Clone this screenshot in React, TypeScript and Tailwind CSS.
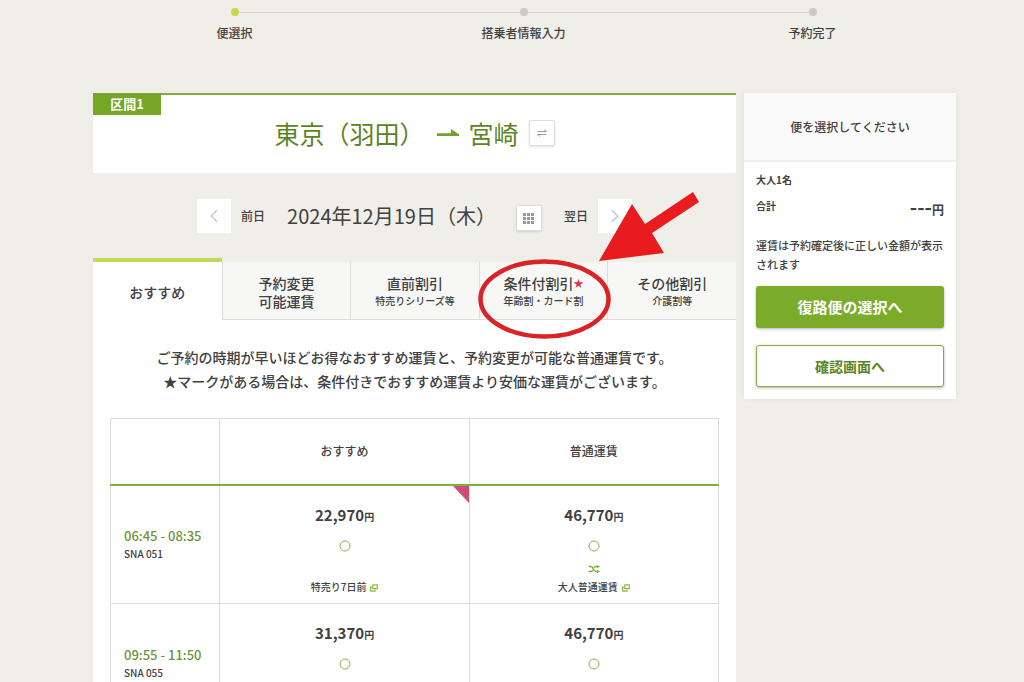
import { ChevronLeft, ChevronRight } from "lucide-react";

const steps = ["便選択", "搭乗者情報入力", "予約完了"];

const tabs = [
  { title: "おすすめ", active: true },
  { title: "予約変更", second: "可能運賃" },
  { title: "直前割引", sub: "特売りシリーズ等" },
  { title: "条件付割引", sub: "年齢割・カード割", star: true },
  { title: "その他割引", sub: "介護割等" },
];

type Fare = {
  price: string;
  name?: string;
  changeable?: boolean;
  cheaper?: boolean;
};

type Flight = { time: string; code: string; fares: Fare[] };

const flights: Flight[] = [
  {
    time: "06:45 - 08:35",
    code: "SNA 051",
    fares: [
      { price: "22,970", name: "特売り7日前", cheaper: true },
      { price: "46,770", name: "大人普通運賃", changeable: true },
    ],
  },
  {
    time: "09:55 - 11:50",
    code: "SNA 055",
    fares: [{ price: "31,370" }, { price: "46,770" }],
  },
];

function Steps() {
  return (
    <ol className="grid grid-cols-3 pt-2 pl-[90px] pr-[67px]">
      {steps.map((step, i) => (
        <li key={step} className="flex flex-col gap-2">
          <div className="flex items-center">
            <span className={i === 0 ? "flex-1" : "h-px flex-1 bg-[#d3d2ce]"} />
            <span
              className={
                i === 0
                  ? "size-2 rounded-full bg-[#c3d94a]"
                  : "size-2 rounded-full bg-[#c9c9c9]"
              }
            />
            <span
              className={
                i === steps.length - 1 ? "flex-1" : "h-px flex-1 bg-[#d3d2ce]"
              }
            />
          </div>
          <span className="text-center text-xs leading-[18px]">{step}</span>
        </li>
      ))}
    </ol>
  );
}

function RouteHeader() {
  return (
    <section className="relative flex h-20 items-center justify-center rounded-b-xs border-t-2 border-[#83ad41] bg-white pb-0.5">
      <span className="absolute -top-0.5 left-0 flex h-[22px] w-[68px] items-center justify-center bg-[#76a626] text-[13px] font-bold text-white">
        区間1
      </span>
      <h1 className="flex items-center text-[25px] leading-8 font-normal text-[#5b8524]">
        <span>東京（羽田）</span>
        <svg
          className="mr-[10px] ml-3"
          width="22"
          height="8"
          viewBox="0 0 22 8"
          fill="#76a132"
          aria-hidden="true"
        >
          <path d="M0 4.2H14V0L22 5.2V7H0Z" />
        </svg>
        <span>宮崎</span>
      </h1>
      <button
        type="button"
        aria-label="区間を入れ替える"
        className="ml-[10px] flex size-[26px] items-center justify-center rounded-xs border border-[#dedede] bg-white shadow-sm"
      >
        <svg
          width="10"
          height="8"
          viewBox="0 0 10 8"
          fill="none"
          stroke="#858585"
          strokeWidth="0.8"
        >
          <path d="M0.5 2.5H9.5M7 0.5L9.5 2.5M9.5 5.5H0.5M3 7.5L0.5 5.5" />
        </svg>
      </button>
    </section>
  );
}

function DateNav() {
  return (
    <div className="mt-[26px] flex items-center justify-center text-xs">
      <button
        type="button"
        aria-label="前日へ"
        className="flex size-[34px] items-center justify-center bg-white text-[#c8c8c8]"
      >
        <ChevronLeft size={22} strokeWidth={1.5} />
      </button>
      <span className="ml-[10px]">前日</span>
      <p className="ml-[22px] text-xl leading-[34px] font-normal">
        2024年12月19日（木）
      </p>
      <button
        type="button"
        aria-label="カレンダー"
        className="mt-1 ml-5 flex size-[26px] items-center justify-center rounded-xs border border-[#dedede] bg-white shadow-sm"
      >
        <svg width="11" height="11" viewBox="0 0 11 11" fill="#979797">
          {[0, 4, 8].map((y) =>
            [0, 4, 8].map((x) => (
              <rect key={`${x}-${y}`} x={x} y={y} width="3" height="3" />
            )),
          )}
        </svg>
      </button>
      <span className="ml-[22px]">翌日</span>
      <button
        type="button"
        aria-label="翌日へ"
        className="ml-[10px] flex size-[34px] items-center justify-center bg-white text-[#bccbd2]"
      >
        <ChevronRight size={22} strokeWidth={1.5} />
      </button>
    </div>
  );
}

// hand-drawn style marker: ring round the tab and an arrow pointing at it
function Marker() {
  return (
    <svg
      className="pointer-events-none absolute -top-[72px] -left-1 z-10 max-w-none"
      width="225"
      height="152"
      viewBox="0 0 225 152"
      aria-hidden="true"
    >
      <ellipse
        cx="69.5"
        cy="109"
        rx="64"
        ry="37.5"
        fill="none"
        stroke="#d92327"
        strokeWidth="4.5"
      />
      <path
        d="M124 71L157 14L170 34L218 2L224 12L177 43L189 63Z"
        fill="#e81c1e"
      />
    </svg>
  );
}

function FareTabs() {
  return (
    <div className="mt-[25px] grid grid-cols-5 items-end">
      {tabs.map((tab) => (
        <div key={tab.title} className="relative">
          <button
            type="button"
            aria-pressed={!!tab.active}
            className={
              tab.active
                ? "flex h-[62px] w-full flex-col items-center justify-center border-t-4 border-[#c5d85a] bg-white pt-0.5 text-sm leading-[18px]"
                : "flex h-[58px] w-full flex-col items-center justify-center border-b border-l border-[#dcdcdc] bg-[#f7f7f6] pt-0.5 text-sm leading-[18px]"
            }
          >
            <span className="flex items-center">
              {tab.title}
              {tab.star && (
                <span className="text-[10px] text-[#d0354d]">★</span>
              )}
            </span>
            {tab.second && <span>{tab.second}</span>}
            {tab.sub && <span className="text-[10px]">{tab.sub}</span>}
          </button>
          {tab.star && <Marker />}
        </div>
      ))}
    </div>
  );
}

function WindowIcon() {
  return (
    <svg
      className="mt-0.5"
      width="8"
      height="8"
      viewBox="0 0 8 8"
      fill="none"
      stroke="#8fb93c"
      strokeWidth="1.2"
      aria-hidden="true"
    >
      <path d="M2.8 0.8H7.3V4.6H2.8Z" />
      <path d="M2.2 3.2H0.6V7.2H5V5.4" />
    </svg>
  );
}

function ShuffleIcon() {
  return (
    <svg
      className="mx-auto block"
      width="12"
      height="8"
      viewBox="0 0 12 8"
      fill="none"
      stroke="#7fb03a"
      strokeWidth="1.3"
      aria-hidden="true"
    >
      <path d="M0.5 1.5H3C5.5 1.5 5 6.5 7.5 6.5H10M0.5 6.5H3C4 6.5 4.5 5.8 4.9 5M5.8 3C6.2 2.2 6.6 1.5 7.5 1.5H10" />
      <path d="M9 0L12 1.5L9 3.2ZM9 4.8L12 6.5L9 8Z" fill="#7fb03a" stroke="none" />
    </svg>
  );
}

function FareCell({ fare }: { fare: Fare }) {
  return (
    <td className="relative h-[119px] border border-[#dcdcdc] p-0 pt-[19px] text-center align-top">
      {fare.cheaper && (
        <svg
          className="absolute top-0 right-0"
          width="16"
          height="17"
          viewBox="0 0 16 17"
          fill="#c94f74"
          aria-hidden="true"
        >
          <path d="M0 0H16V17Z" />
        </svg>
      )}
      <p className="text-[15px] leading-5 font-bold">
        {fare.price}
        <span className="text-[10px]">円</span>
      </p>
      <svg
        className="mx-auto mt-[13px] block"
        width="12"
        height="12"
        viewBox="0 0 12 12"
        fill="none"
        stroke="#8bb04e"
        role="img"
        aria-label="空席あり"
      >
        <circle cx="6" cy="6" r="5" />
      </svg>
      <div className="mt-[13px] h-2">{fare.changeable && <ShuffleIcon />}</div>
      {fare.name && (
        <a
          href="#fare"
          className="mt-[6px] flex items-center justify-center gap-1 text-[10px] leading-4"
        >
          {fare.name}
          <WindowIcon />
        </a>
      )}
    </td>
  );
}

function FlightTable() {
  return (
    <table className="mt-[25px] w-full table-fixed border-collapse">
      <colgroup>
        <col className="w-[18%]" />
        <col className="w-[41%]" />
        <col className="w-[41%]" />
      </colgroup>
      <thead>
        <tr className="h-[66px] border-b-2 border-[#83ad41] text-xs">
          <td className="border-x border-t border-x-[#dcdcdc] border-t-[#dcdcdc]" />
          <th className="border-x border-t border-x-[#dcdcdc] border-t-[#dcdcdc] font-medium">
            おすすめ
          </th>
          <th className="border-x border-t border-x-[#dcdcdc] border-t-[#dcdcdc] font-medium">
            普通運賃
          </th>
        </tr>
      </thead>
      <tbody>
        {flights.map((flight) => (
          <tr key={flight.code}>
            <th className="border border-[#dcdcdc] py-0 pr-0 pl-[13px] text-left font-medium">
              <p className="pt-0.5 text-[13px] leading-[18px] text-[#6b9537]">
                {flight.time}
              </p>
              <p className="text-[10px] leading-[18px]">{flight.code}</p>
            </th>
            {flight.fares.map((fare, i) => (
              <FareCell key={i} fare={fare} />
            ))}
          </tr>
        ))}
      </tbody>
    </table>
  );
}

function Summary() {
  return (
    <aside className="w-[212px] shrink-0 bg-white shadow-[0_0_6px_rgba(0,0,0,0.06)]">
      <p className="flex h-[69px] items-center justify-center border-b-2 border-[#ededed] bg-[#fafafa] text-xs">
        便を選択してください
      </p>
      <div className="px-3 pt-[9px] pb-3">
        <p className="text-[10px] leading-[18px] font-bold">大人1名</p>
        <div className="mt-2 flex items-start justify-between">
          <span className="text-[10px] leading-[18px] font-bold">合計</span>
          <span className="text-xl leading-5 font-bold">
            ---<span className="text-xs">円</span>
          </span>
        </div>
        <p className="mt-[18px] text-[11px] leading-[19px]">
          運賃は予約確定後に正しい金額が表示されます
        </p>
        <button
          type="button"
          className="mt-3 h-[42px] w-full rounded-[3px] bg-[#7aab2a] text-[15px] font-bold text-white shadow-[0_1px_3px_rgba(0,0,0,0.3)]"
        >
          復路便の選択へ
        </button>
        <button
          type="button"
          className="mt-[17px] h-[42px] w-full rounded-[3px] border border-[#83ad41] bg-white text-sm font-bold text-[#5b8524] shadow-[0_1px_3px_rgba(0,0,0,0.3)]"
        >
          確認画面へ
        </button>
      </div>
    </aside>
  );
}

export default function App() {
  return (
    <div className="min-h-screen bg-[#f0eee9] font-['Noto_Sans_CJK_JP',sans-serif] font-medium text-[#404040]">
      <Steps />
      <div className="mt-[51px] flex items-start gap-2 pr-[68px] pl-[93px]">
        <main className="min-w-0 flex-1">
          <RouteHeader />
          <DateNav />
          <FareTabs />
          <section className="bg-white px-[17px] pt-[25px] pb-6">
            <p className="text-center text-sm leading-6">
              ご予約の時期が早いほどお得なおすすめ運賃と、予約変更が可能な普通運賃です。
              <br />
              ★マークがある場合は、条件付きでおすすめ運賃より安価な運賃がございます。
            </p>
            <FlightTable />
          </section>
        </main>
        <Summary />
      </div>
    </div>
  );
}
